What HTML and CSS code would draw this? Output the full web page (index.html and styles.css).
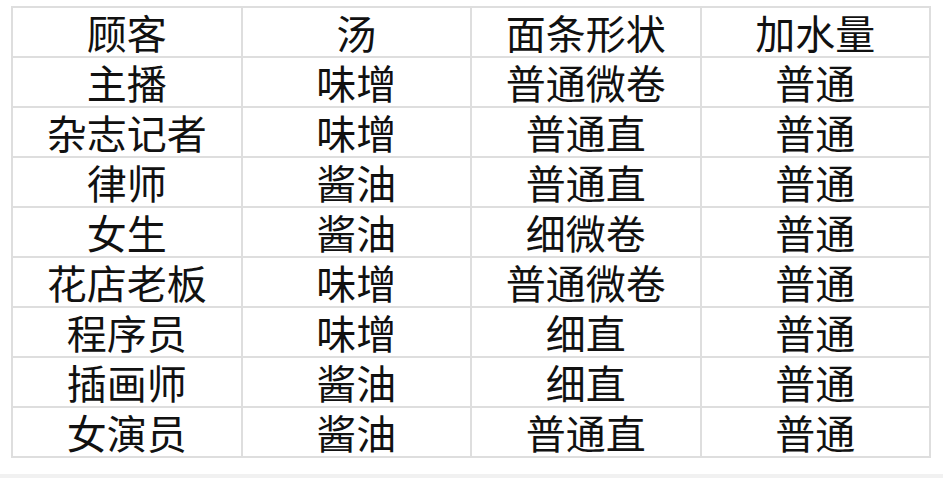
FILE: index.html
```html
<!DOCTYPE html>
<html lang="zh-CN">
<head>
<meta charset="utf-8">
<link rel="stylesheet" href="styles.css">
</head>
<body>
<div class="page">
<table class="grid">
<tr><td>顾客</td><td>汤</td><td>面条形状</td><td>加水量</td></tr>
<tr><td>主播</td><td>味增</td><td>普通微卷</td><td>普通</td></tr>
<tr><td>杂志记者</td><td>味增</td><td>普通直</td><td>普通</td></tr>
<tr><td>律师</td><td>酱油</td><td>普通直</td><td>普通</td></tr>
<tr><td>女生</td><td>酱油</td><td>细微卷</td><td>普通</td></tr>
<tr><td>花店老板</td><td>味增</td><td>普通微卷</td><td>普通</td></tr>
<tr><td>程序员</td><td>味增</td><td>细直</td><td>普通</td></tr>
<tr><td>插画师</td><td>酱油</td><td>细直</td><td>普通</td></tr>
<tr><td>女演员</td><td>酱油</td><td>普通直</td><td>普通</td></tr>
</table>
<div class="band"></div>
</div>
</body>
</html>
```
FILE: styles.css
```css
html, body {
  margin: 0;
  padding: 0;
  background: #ffffff;
}
.page {
  width: 943px;
  height: 478px;
  overflow: hidden;
  display: flex;
  flex-direction: column;
  padding-top: 6px;
  box-sizing: border-box;
}
.grid {
  margin-left: 11px;
  width: 920px;
  border-collapse: collapse;
  table-layout: fixed;
  font-family: "Noto Sans CJK SC", "Noto Sans", sans-serif;
  font-size: 40px;
  color: #111111;
}
.grid tr {
  height: 50px;
}
.grid td {
  padding: 0;
  border: 2px solid #dedede;
  text-align: center;
  vertical-align: middle;
  line-height: 40px;
}
.band {
  margin-top: 16px;
  flex: 1;
  background: #f1f1f1;
}
```
